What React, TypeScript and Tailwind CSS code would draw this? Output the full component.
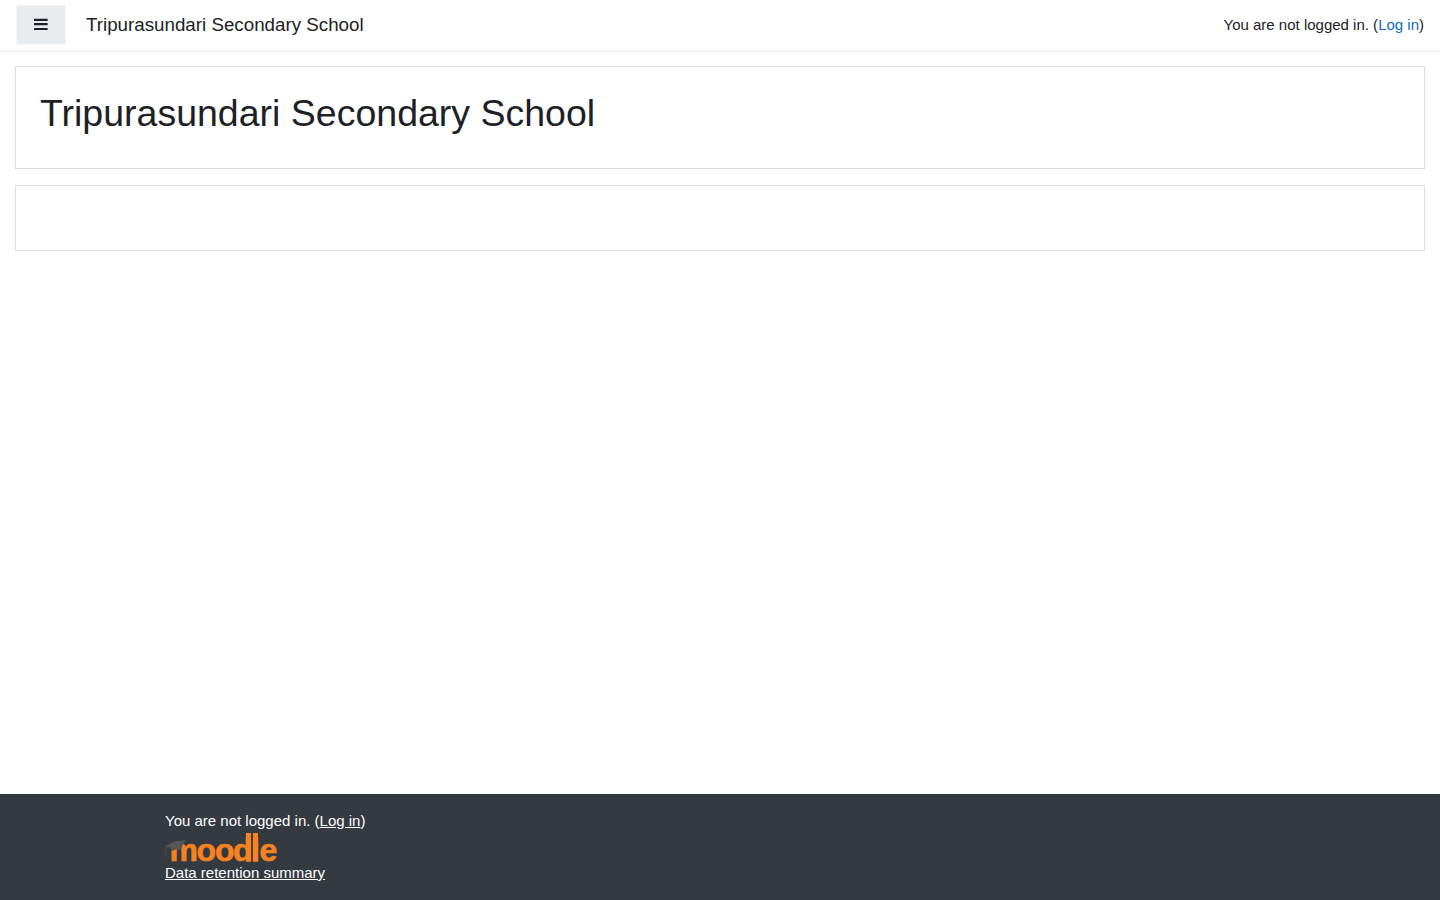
function MenuIcon() {
  return (
    <svg className="block h-4 w-[14px]" viewBox="0 0 14 16" fill="#1d2125" aria-hidden="true">
      <rect x="0" y="2.7" width="13.7" height="2.3" rx="0.3" />
      <rect x="0" y="7" width="13.7" height="2.3" rx="0.3" />
      <rect x="0" y="11.9" width="13.7" height="2.1" rx="0.3" />
    </svg>
  );
}

function MoodleLogo() {
  return (
    <svg className="block h-[30px] w-[113px] overflow-visible" viewBox="0 0 113 30" role="img" aria-label="Moodle">
      <text
        x="4.4 31.5 49.9 68 86 94.4"
        y="28.4"
        fill="#f6831f"
        stroke="#f6831f"
        strokeWidth="0.6"
        className="font-['Liberation_Sans',Arial,sans-serif] text-[32px] font-bold"
      >
        moodle
      </text>
      <rect x="81" y="0" width="5" height="28.7" fill="#f6831f" />
      <rect x="88" y="0" width="5" height="28.7" fill="#f6831f" />
      <path d="M0 13.2 9 8.4 21.5 7 17.5 12 16.5 16.5C13 15.7 9.8 16.2 7 18.2L6 14.2 1.5 14.5Z" fill="#575656" />
      <path d="M1 14C.2 17.5.2 20 1 24" fill="none" stroke="#4b4d50" strokeWidth="0.8" />
    </svg>
  );
}

export default function App() {
  return (
    <div className="flex h-screen flex-col overflow-hidden bg-white font-['Liberation_Sans',Arial,sans-serif] text-[15px] leading-[22.5px] text-[#1d2125]">
      <header className="flex h-[50px] shrink-0 items-center bg-white px-4 shadow-[0_2px_4px_rgba(0,0,0,0.08)]">
        <button
          type="button"
          aria-label="Side panel"
          className="flex h-10 w-[50px] items-center justify-center border border-[#f5f7f9] bg-[#e9ecef] pb-0.5"
        >
          <MenuIcon />
        </button>
        <a href="#" className="ml-5 text-[18.75px] leading-7">Tripurasundari Secondary School</a>
        <div className="ml-auto">
          You are not logged in. (<a href="#" className="text-[#0f6cbf]">Log in</a>)
        </div>
      </header>
      <main className="flex flex-1 flex-col gap-4 px-[15px] pt-4">
        <section className="h-[103px] border border-[#dfdfdf] bg-white px-6 pt-6">
          <h1 className="text-[37.5px] leading-[45px]">Tripurasundari Secondary School</h1>
        </section>
        <section className="h-[66px] border border-[#dfdfdf] bg-white" />
      </main>
      <footer className="h-[106px] shrink-0 bg-[#343a40] px-[165px] pt-4 text-white">
        <div className="h-[23px]">
          You are not logged in. (<a href="#" className="underline">Log in</a>)
        </div>
        <MoodleLogo />
        <a href="#" className="block w-fit leading-[19px] underline">Data retention summary</a>
      </footer>
    </div>
  );
}
